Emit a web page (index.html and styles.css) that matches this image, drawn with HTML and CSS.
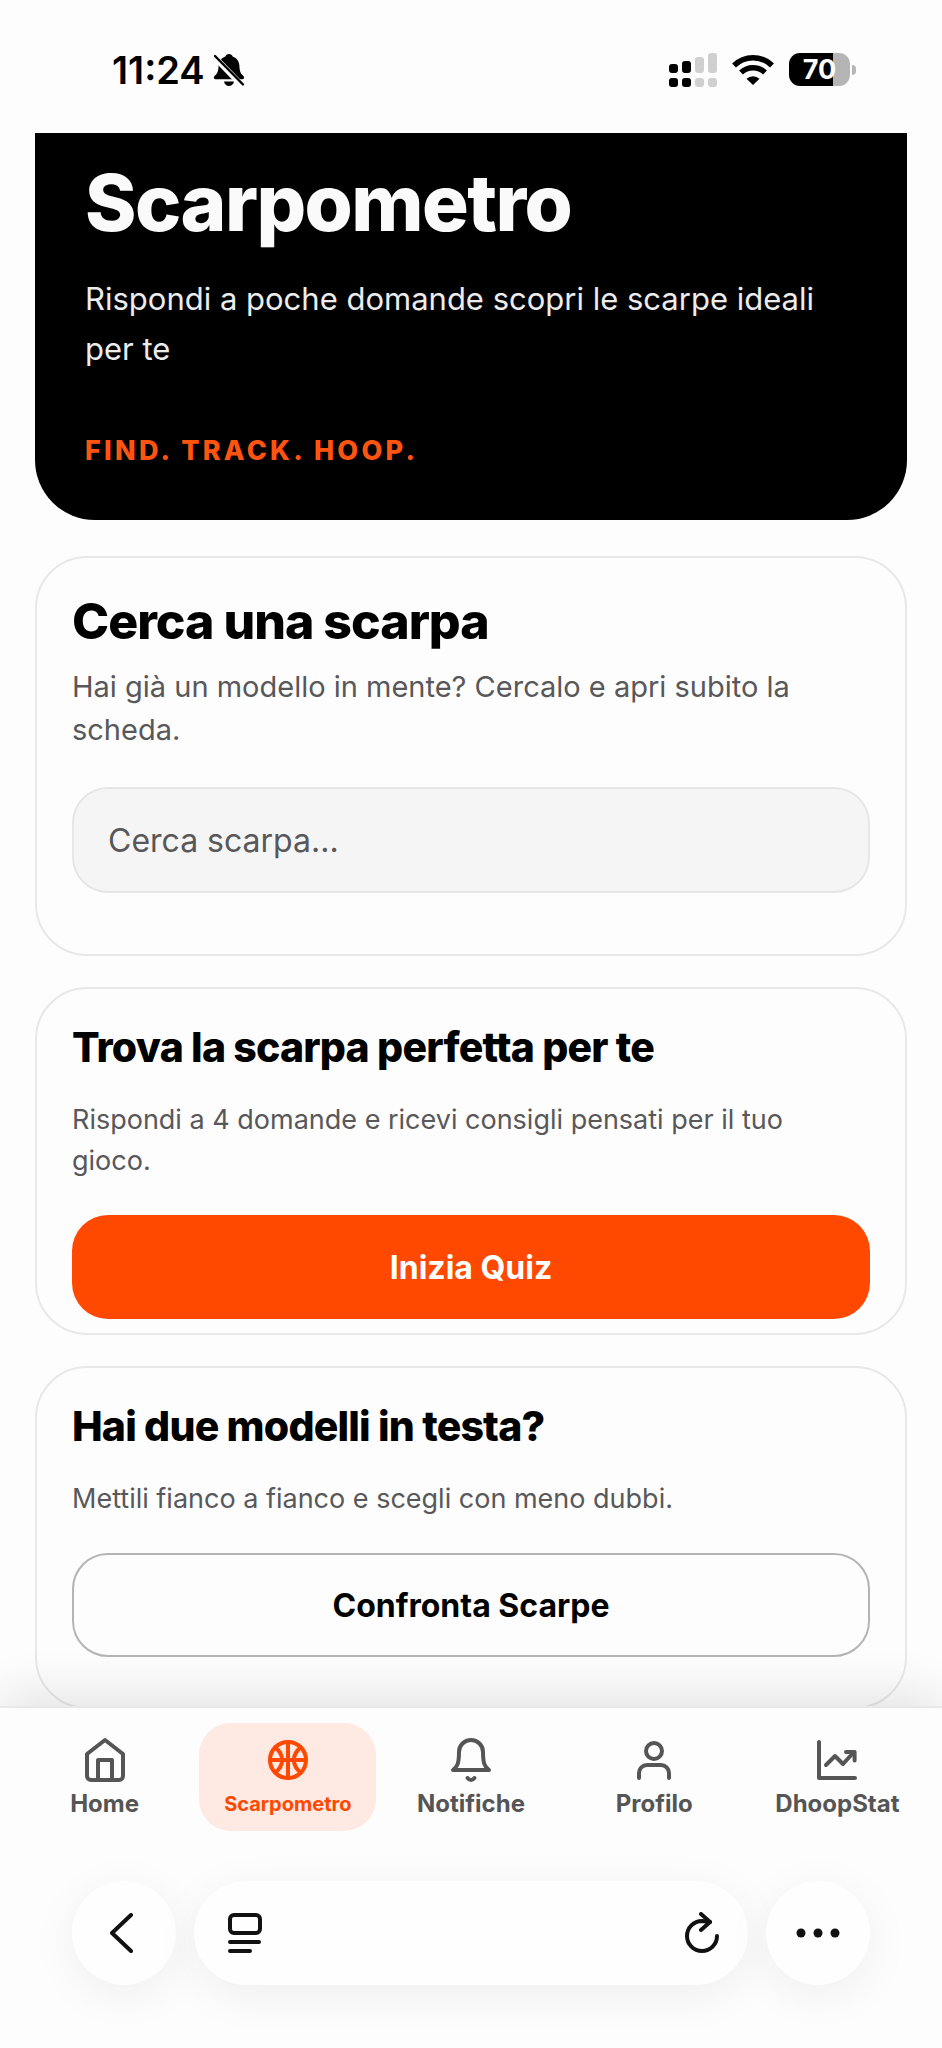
FILE: index.html
```html
<!DOCTYPE html>
<html lang="it">
<head>
    <meta charset="UTF-8">
    <meta name="viewport" content="width=device-width, initial-scale=1.0">
    <title>Scarpometro</title>
    <link rel="stylesheet" href="styles.css">
</head>
<body>
    <div class="status-bar">
        <div class="status-left">
            <span class="time">11:24</span>
            <svg class="mute" width="32" height="34" viewBox="0 0 32 34">
                <path d="M16 1c-1.800 0-3.200 1-3.600 2.500C8 5 5.800 8.500 5.600 13c-.2 5-1.200 7.500-3.600 9.500-1.600 1.400-1.500 3.700.5 3.700h27c2 0 2.100-2.300.5-3.700-2.400-2-3.400-4.500-3.600-9.500-.2-4.500-2.400-8-6.800-9.500C19.200 2 17.800 1 16 1z" fill="#000"/>
                <path d="M11 28.500h10c-.6 2.800-2.500 4.500-5 4.500s-4.400-1.700-5-4.500z" fill="#000"/>
                <path d="M0 2.500l29 30" stroke="#fdfdfd" stroke-width="6"/>
                <path d="M2 3l28 28.500" stroke="#000" stroke-width="2.400" stroke-linecap="round"/>
            </svg>
        </div>
        <div class="status-right">
            <svg width="48" height="34" viewBox="0 0 48 34">
                <g fill="#000">
                    <rect x="0" y="11" width="9" height="9" rx="3"/>
                    <rect x="13" y="8" width="9" height="12" rx="3"/>
                    <rect x="0" y="25" width="9" height="9" rx="3"/>
                    <rect x="13" y="25" width="9" height="9" rx="3"/>
                </g>
                <g fill="#cfcfcf">
                    <rect x="26" y="4" width="9" height="16" rx="3"/>
                    <rect x="39" y="0" width="9" height="20" rx="3"/>
                    <rect x="26" y="25" width="9" height="9" rx="3"/>
                    <rect x="39" y="25" width="9" height="9" rx="3"/>
                </g>
            </svg>
            <svg width="42" height="32" viewBox="0 0 42 32">
                <g fill="none" stroke="#000" stroke-width="5.500">
                    <path d="M2 11.500a27 27 0 0 1 38 0"/>
                    <path d="M9 18.500a17.300 17.300 0 0 1 24 0"/>
                </g>
                <path d="M21 31l-6.500-6.300a9.500 9.500 0 0 1 13 0z" fill="#000"/>
            </svg>
            <div class="battery"><span class="level">70</span></div>
        </div>
    </div>

    <main class="content">
        <section class="hero">
            <h1>Scarpometro</h1>
            <p>Rispondi a poche domande scopri le scarpe ideali per te</p>
            <div class="tagline">FIND. TRACK. HOOP.</div>
        </section>

        <section class="card search-card">
            <h2><label for="search">Cerca una scarpa</label></h2>
            <p>Hai già un modello in mente? Cercalo e apri subito la scheda.</p>
            <input type="text" id="search" placeholder="Cerca scarpa...">
        </section>

        <section class="card quiz-card">
            <h3>Trova la scarpa perfetta per te</h3>
            <p>Rispondi a 4 domande e ricevi consigli pensati per il tuo gioco.</p>
            <button class="btn btn-primary">Inizia Quiz</button>
        </section>

        <section class="card compare-card">
            <h3>Hai due modelli in testa?</h3>
            <p>Mettili fianco a fianco e scegli con meno dubbi.</p>
            <button class="btn btn-outline">Confronta Scarpe</button>
        </section>
    </main>

    <nav class="tab-bar">
        <a href="#" class="tab">
            <svg viewBox="0 0 24 24">
                <path d="M3 9l9-7 9 7v11a2 2 0 0 1-2 2H5a2 2 0 0 1-2-2z"/>
                <path d="M8.500 22V12h7v10"/>
            </svg>
            <span>Home</span>
        </a>
        <a href="#" class="tab active">
            <svg viewBox="0 0 24 24">
                <circle cx="12" cy="12" r="9"/>
                <path d="M12 3v18M3 12h18M5.600 5.700c4.600 3.600 4.600 9 0 12.600M18.400 5.700c-4.600 3.600-4.600 9 0 12.600"/>
            </svg>
            <span>Scarpometro</span>
        </a>
        <a href="#" class="tab">
            <svg viewBox="0 0 24 24">
                <path d="M18 8A6 6 0 0 0 6 8c0 6-1 7.500-3 9h18c-2-1.500-3-3-3-9"/>
                <path d="M13.700 21a2 2 0 0 1-3.400 0"/>
            </svg>
            <span>Notifiche</span>
        </a>
        <a href="#" class="tab">
            <svg viewBox="0 0 24 24">
                <circle cx="12" cy="7.500" r="4"/>
                <path d="M4.500 21v-2.500a4 4 0 0 1 4-4h7a4 4 0 0 1 4 4V21"/>
            </svg>
            <span>Profilo</span>
        </a>
        <a href="#" class="tab">
            <svg viewBox="0 0 24 24">
                <path d="M3 3v18h18"/>
                <path d="M6.500 14.500l4.500-4.500 4 4 5.500-6"/>
                <path d="M16.500 8h4.300v4.300"/>
            </svg>
            <span>DhoopStat</span>
        </a>
    </nav>

    <div class="browser-bar">
        <button class="round" aria-label="Indietro">
            <svg width="28" height="40" viewBox="0 0 28 40"><path d="M21 2L2 20l19 18"/></svg>
        </button>
        <div class="address">
            <button aria-label="Pagina">
                <svg width="34" height="42" viewBox="0 0 34 42">
                    <rect x="2" y="3" width="30" height="18" rx="4"/>
                    <path d="M2 30h29M2 39h20"/>
                </svg>
            </button>
            <button aria-label="Ricarica">
                <svg width="34" height="42" viewBox="0 0 34 42">
                    <path d="M32 24a15 15 0 1 1-15-15l8 1"/>
                    <path d="M16 2l9 8-9 8"/>
                </svg>
            </button>
        </div>
        <button class="round" aria-label="Altro">
            <svg width="44" height="10" viewBox="0 0 44 10" class="dots">
                <circle cx="5" cy="5" r="4.500"/>
                <circle cx="22" cy="5" r="4.500"/>
                <circle cx="39" cy="5" r="4.500"/>
            </svg>
        </button>
    </div>
</body>
</html>
```
FILE: styles.css
```css
*{
    margin: 0;
    padding: 0;
    box-sizing: border-box;
    font-family: Inter, "Liberation Sans", sans-serif;
}
body{
    min-height: 100vh;
    display: flex;
    flex-direction: column;
    background-color: #fdfdfd;
    color: #000;
}
button{
    border: none;
    background: none;
    cursor: pointer;
}

/* status bar */
.status-bar{
    height: 133px;
    padding: 6px 86px 0 112px;
    display: flex;
    align-items: center;
    justify-content: space-between;
}
.status-left{
    display: flex;
    align-items: center;
    gap: 8px;
}
.time{
    font-size: 38px;
    font-weight: 600;
}
.status-right{
    display: flex;
    align-items: center;
    gap: 15px;
}
.battery{
    display: flex;
    align-items: center;
    gap: 2px;
}
.battery::after{
    content: "";
    width: 4px;
    height: 10px;
    border-radius: 0 4px 4px 0;
    background-color: #b5b5b5;
}
.level{
    width: 61px;
    height: 33px;
    border-radius: 11px;
    background: linear-gradient(to right, #000 72%, #b5b5b5 72%);
    color: #fff;
    font-size: 27px;
    line-height: 33px;
    font-weight: 700;
    text-align: center;
}

/* page */
.content{
    padding: 0 35px;
    display: flex;
    flex-direction: column;
    gap: 31px;
}
.hero{
    background-color: #000;
    border-radius: 0 0 60px 60px;
    padding: 22px 50px 52px;
    margin-bottom: 5px;
}
.hero h1{
    color: #fafafa;
    font-size: 78px;
    line-height: 96px;
    font-weight: 800;
    letter-spacing: -0.02em;
}
.hero p{
    margin-top: 23px;
    color: #ececec;
    font-size: 31px;
    line-height: 50px;
}
.tagline{
    margin-top: 60px;
    color: #ff5410;
    font-size: 27px;
    line-height: 34px;
    font-weight: 800;
    letter-spacing: 0.12em;
}
.card{
    border: 2px solid #e8e8e8;
    border-radius: 52px;
    padding: 33px 35px 14px;
    display: flex;
    flex-direction: column;
}
.card p{
    padding-right: 35px;
    color: #58585a;
    font-size: 27px;
    line-height: 41px;
    font-weight: 400;
}
.card h2{
    font-size: 50px;
    line-height: 60px;
    font-weight: 800;
    letter-spacing: -0.02em;
}
.card h3{
    margin-bottom: 27px;
    font-size: 41px;
    line-height: 50px;
    font-weight: 800;
    letter-spacing: -0.02em;
}
.search-card{
    padding-bottom: 61px;
}
.search-card p{
    margin-top: 14px;
    font-size: 29px;
    line-height: 43px;
}
.search-card input{
    margin-top: 36px;
    height: 106px;
    padding: 0 34px;
    border: 2px solid #e6e6e6;
    border-radius: 36px;
    background-color: #f5f5f5;
    font-size: 32px;
    outline: none;
}
.search-card input::placeholder{
    color: #58585a;
    opacity: 1;
}
.btn{
    height: 104px;
    margin-top: 34px;
    border-radius: 36px;
    font-size: 32px;
    font-weight: 700;
}
.btn-primary{
    background-color: #ff4800;
    color: #fff;
}
.btn-outline{
    border: 2px solid #b4b4b4;
    color: #000;
}
.compare-card{
    padding-bottom: 50px;
}

/* bottom navigation, laid over the end of the last card */
.tab-bar{
    position: relative;
    margin-top: -3px;
    padding: 15px 16px 12px;
    display: grid;
    grid-template-columns: repeat(5, minmax(0, 1fr));
    gap: 6px;
    border-top: 2px solid #e8e8e8;
    background-color: #fdfdfd;
    box-shadow: 0 -12px 48px rgba(0, 0, 0, 0.1);
}
.tab{
    height: 108px;
    padding-top: 13px;
    border-radius: 32px;
    display: flex;
    flex-direction: column;
    align-items: center;
    gap: 6px;
    color: #555;
    font-size: 24px;
    line-height: 28px;
    font-weight: 700;
    text-decoration: none;
}
.tab svg{
    width: 48px;
    height: 48px;
    fill: none;
    stroke: currentColor;
    stroke-width: 2;
    stroke-linecap: round;
    stroke-linejoin: round;
}
.tab.active{
    background-color: #ffe9e3;
    color: #ff4800;
    font-size: 20px;
}

/* browser controls */
.browser-bar{
    position: relative;
    flex: 1;
    padding: 38px 72px 62px;
    display: flex;
    gap: 18px;
    background-color: #fdfdfd;
}
.browser-bar svg{
    display: block;
    fill: none;
    stroke: #111;
    stroke-width: 4;
    stroke-linecap: round;
    stroke-linejoin: round;
}
.browser-bar .dots{
    fill: #111;
    stroke: none;
}
.round, .address{
    height: 104px;
    border-radius: 52px;
    background-color: #fefefe;
    box-shadow: 0 10px 48px rgba(0, 0, 0, 0.06);
}
.round{
    width: 104px;
    display: flex;
    align-items: center;
    justify-content: center;
}
.address{
    flex: 1;
    padding: 0 29px 0 34px;
    display: flex;
    align-items: center;
    justify-content: space-between;
}
```
